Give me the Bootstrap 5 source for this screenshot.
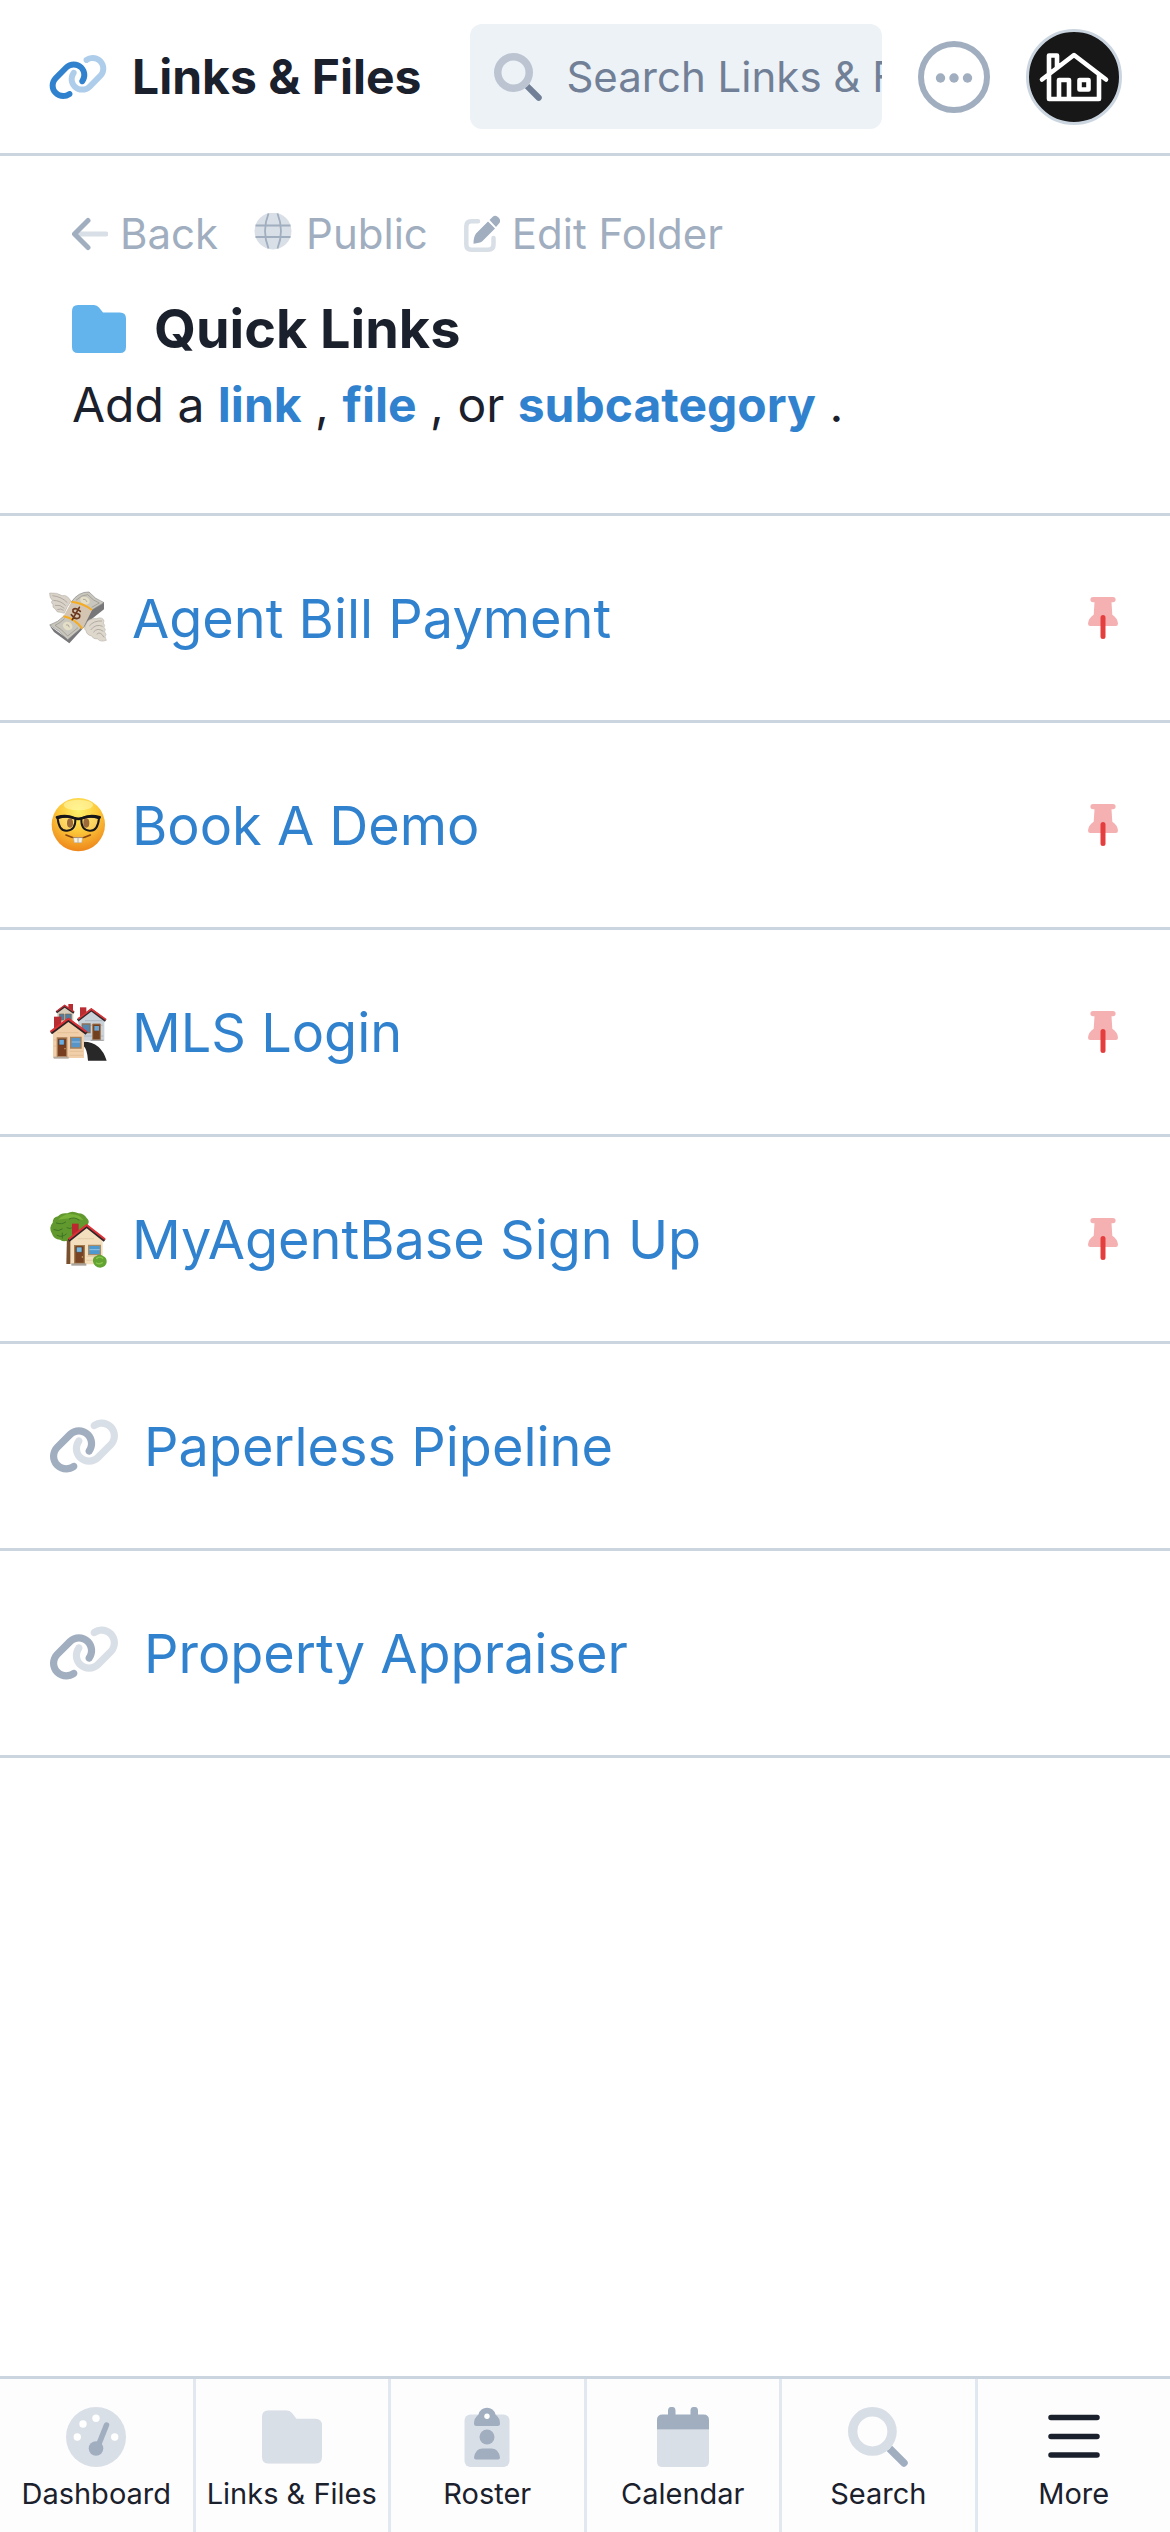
<!DOCTYPE html>
<html lang="en">
<head>
<meta charset="utf-8">
<meta name="viewport" content="width=device-width, initial-scale=1">
<title>Links &amp; Files</title>
<link href="https://cdn.jsdelivr.net/npm/bootstrap@5.3.0/dist/css/bootstrap.min.css" rel="stylesheet">
<style>
  body { font-family: Inter, "Liberation Sans", sans-serif; color: #1a202c; background: #fff; }
  a { text-decoration: none; color: #3182ce; }
  svg { display: block; flex: none; }
  .topbar { padding: 24px 48px; border-bottom: 3px solid #cbd5e0; }
  .brand { gap: 24px; margin-right: 49px; }
  .brand h1 { font-size: 48px; line-height: 72px; font-weight: 700; white-space: nowrap; }
  .finder { height: 105px; padding-left: 24px; gap: 24px; border-radius: 12px; background: #edf2f7; min-width: 0; overflow: hidden; }
  .finder input { font-size: 42px; line-height: 63px; border: 0; padding: 0; background: transparent; min-width: 0; width: 100%; outline: 0; color: #1a202c; }
  .finder input::placeholder { color: #718096; opacity: 1; }
  .round-btn { margin-left: 36px; padding: 0; border: 0; background: none; flex: none; }
  .folder-head { padding: 48px 72px 72px; border-bottom: 3px solid #cbd5e0; }
  .crumbs { gap: 36px; margin-bottom: 24px; }
  .crumbs a { gap: 12px; font-size: 42px; line-height: 60px; color: #a0aec0; }
  .folder-title { gap: 28px; }
  .folder-title h2 { font-size: 54px; line-height: 81px; font-weight: 700; }
  .folder-head p { font-size: 48px; line-height: 72px; }
  .folder-head p a { font-weight: 700; }
  .entry { height: 207px; padding: 0 52px 0 48px; border-bottom: 3px solid #cbd5e0; }
  .entry a { gap: 24px; font-size: 54px; line-height: 81px; }
  .tabbar { border-top: 3px solid #cbd5e0; background: #fdfdfe; }
  .tabbar li { flex: 1 1 0; }
  .tabbar li + li { border-left: 3px solid #e2e8f0; }
  .tabbar a { padding: 28px 0 20px; gap: 9px; font-size: 29px; line-height: 36px; color: #1a202c; white-space: nowrap; }
</style>
</head>
<body class="d-flex flex-column min-vh-100">

<svg width="0" height="0" class="position-absolute" aria-hidden="true">
  <symbol id="chain" viewBox="0 0 640 512">
    <path opacity=".4" d="M579.8 267.7c56.5-56.5 56.5-148 0-204.5c-50-50-128.8-56.5-186.3-15.4l-1.6 1.1c-14.4 10.3-17.7 30.3-7.4 44.6s30.3 17.7 44.6 7.4l1.6-1.1c32.1-22.9 76-19.3 103.8 8.6c31.5 31.5 31.5 82.5 0 114L422.3 334.8c-31.5 31.5-82.5 31.5-114 0c-27.9-27.9-31.5-71.8-8.6-103.8l1.1-1.6c10.3-14.4 6.9-34.4-7.4-44.6s-34.4-6.9-44.6 7.4l-1.1 1.6C206.5 251.2 213 330 263 380c56.5 56.5 148 56.5 204.5 0L579.8 267.7z"/>
    <path d="M60.2 244.3c-56.5 56.5-56.5 148 0 204.5c50 50 128.8 56.5 186.3 15.4l1.6-1.1c14.4-10.3 17.7-30.3 7.4-44.6s-30.3-17.7-44.6-7.4l-1.6 1.1c-32.1 22.9-76 19.3-103.8-8.6C74 372 74 321 105.5 289.5L217.7 177.2c31.5-31.5 82.5-31.5 114 0c27.9 27.9 31.5 71.8 8.6 103.9l-1.1 1.6c-10.3 14.4-6.9 34.4 7.4 44.6s34.4 6.9 44.6-7.4l1.1-1.6C433.5 260.8 427 182 377 132c-56.5-56.5-148-56.5-204.5 0L60.2 244.3z"/>
  </symbol>
  <symbol id="lens" viewBox="0 0 512 512">
    <path opacity=".4" d="M208 0a208 208 0 1 0 0 416a208 208 0 1 0 0-416zm0 80a128 128 0 1 1 0 256a128 128 0 1 1 0-256z"/>
    <path d="M330 376q28-18 46-46L500 454a32 32 0 0 1-46 46z"/>
  </symbol>
  <symbol id="folder" viewBox="0 0 54 48">
    <path d="M6 0h16q3 0 5 2.500l4 5h17q6 0 6 6v28.500q0 6-6 6H6q-6 0-6-6V6q0-6 6-6z"/>
  </symbol>
  <symbol id="pin" viewBox="0 0 30 42">
    <path fill="#f5b0b2" d="M5 0h20a2.500 2.500 0 0 1 0 5.200h-1.500l.8 12.600q5 3.200 5.700 8.700 0 2.500-2.200 2.500H2.200Q0 29 0 26.500 .7 21 5.700 17.800l.8-12.600H5A2.500 2.500 0 0 1 5 0z"/>
    <path fill="none" stroke="#e53e3e" stroke-width="5" stroke-linecap="round" d="M15 20.500V39.500"/>
  </symbol>
</svg>

<header class="topbar d-flex align-items-center">
  <div class="brand d-flex align-items-center">
    <svg width="60" height="48" fill="#3182ce" aria-hidden="true"><use href="#chain"/></svg>
    <h1 class="mb-0">Links &amp; Files</h1>
  </div>
  <label class="finder d-flex align-items-center flex-grow-1">
    <svg width="48" height="48" fill="#718096" aria-hidden="true"><use href="#lens"/></svg>
    <input type="text" placeholder="Search Links &amp; Files" aria-label="Search Links &amp; Files">
  </label>
  <button class="round-btn" type="button" aria-label="Options">
    <svg width="72" height="72" viewBox="0 0 72 72" fill="#a0aec0"><circle cx="36" cy="36" r="33" fill="none" stroke="#a0aec0" stroke-width="6"/><circle cx="22.500" cy="37" r="4.700"/><circle cx="36" cy="37" r="4.700"/><circle cx="49.500" cy="37" r="4.700"/></svg>
  </button>
  <button class="round-btn" type="button" aria-label="Account">
    <svg width="96" height="96" viewBox="0 0 96 96"><circle cx="48" cy="48" r="46.500" fill="#171717" stroke="#cbd5e0" stroke-width="3"/>
      <g fill="none" stroke="#fff" stroke-width="4.600" stroke-linecap="round" stroke-linejoin="round"><path d="M16 50.500 48 26 80 50.500M23 46V70H73V46M23 44V26.500H31V38M33 70V51H43V70M53.500 51h9v9.500h-9z"/></g></svg>
  </button>
</header>

<main class="flex-grow-1">
  <section class="folder-head">
    <nav class="crumbs d-flex" aria-label="Folder actions">
      <a href="#" class="d-flex align-items-center">
        <svg width="36" height="36" viewBox="0 0 36 36" fill="none" stroke="#a0aec0" stroke-width="5" stroke-linecap="round" stroke-linejoin="round"><path opacity=".4" d="M7 18H34"/><path d="M16 4.500 2.500 18 16 31.500"/></svg>Back</a>
      <a href="#" class="d-flex align-items-center">
        <svg width="40" height="42" viewBox="0 0 40 42"><circle cx="19" cy="18" r="18.500" fill="#d9dfe6"/><path fill="none" stroke="#a0aec0" stroke-width="1.800" d="M1.500 12.500H36.500M1.500 24H36.500M14.500 .5Q7.500 18 14.500 35.500M23.500 .5Q30.500 18 23.500 35.500"/></svg>Public</a>
      <a href="#" class="d-flex align-items-center">
        <svg width="36" height="38" viewBox="0 0 36 38"><path fill="none" stroke="#d9dfe6" stroke-width="4.500" stroke-linecap="round" d="M14 6.300H7.500Q2.300 6.300 2.300 11.500V29.500Q2.300 34.800 7.500 34.800H24Q29.500 34.800 29.500 29.500V23"/><path fill="#a0aec0" d="M24 6.500 31 13.500 18 26.500Q16 28 9.500 28.700 9.500 22 12 18.500zM25.500 5 28.500 2Q31.500-.5 34.500 2.500T35 8.500L32 12z"/></svg>Edit Folder</a>
    </nav>
    <div class="folder-title d-flex align-items-center">
      <svg width="54" height="48" fill="#63b3ed" aria-hidden="true"><use href="#folder"/></svg>
      <h2 class="mb-0">Quick Links</h2>
    </div>
    <p class="mb-0">Add a <a href="#">link</a> , <a href="#">file</a> , or <a href="#">subcategory</a> .</p>
  </section>

  <ul class="list-unstyled mb-0">
    <li class="entry d-flex align-items-center justify-content-between">
      <a href="#" class="d-flex align-items-center">
        <svg width="60" height="60" viewBox="54 54 180 180" aria-hidden="true">
          <path fill="#d8d2c8" stroke="#aaa49d" stroke-width="1.500" d="M123 94Q112 73 96 77 83 67 59 69 58 83 67 91 61 98 69 104 66 113 76 117 79 128 91 127L103 130 112 110z"/>
          <path fill="none" stroke="#9d968f" stroke-width="2" d="M67 77Q95 80 112 98M70 91Q92 92 107 107M75 106Q91 103 103 115M82 119Q92 114 101 121"/>
          <path fill="#77777a" d="M59 167 113 207 154 170 187 118 222 96V118L184 148 118 220 72 186z"/>
          <path fill="#c9c7bd" stroke="#858585" stroke-width="2" d="M124 96Q145 65 177 66 195 88 222 98 201 110 186 120 158 99 124 96zM102 138Q84 157 59 165 87 180 113 209 136 189 154 174 134 146 102 138z"/>
          <path fill="none" stroke="#929087" stroke-width="2" d="M138 91Q155 74 173 74 190 93 208 99L185 112M104 146Q89 160 75 166 96 178 113 198L144 173"/>
          <ellipse cx="165" cy="92" rx="15" ry="11" fill="#e4dec7" transform="rotate(25 165 92)"/><ellipse cx="113" cy="168" rx="15" ry="12" fill="#e4dec7" transform="rotate(25 113 168)"/>
          <path fill="none" stroke="#929087" stroke-width="2" d="M159 88q8-3 12 8M108 165q8-4 10 7"/>
          <path fill="#d3c5b2" d="M124 96Q160 99 186 120L158 177Q136 145 100 140z"/>
          <path fill="none" stroke="#f6ac21" stroke-width="6" d="M124 95Q160 99 186 120M100 139Q134 145 157 176"/>
          <path fill="none" stroke="#6b3820" stroke-width="5" stroke-linecap="round" d="M151 124Q137 111 129 119 127 130 140 130 153 132 148 143 137 151 124 134M148 112 127 149"/>
          <path fill="#ddd7cc" stroke="#aaa49d" stroke-width="1.500" d="M170 158Q178 144 199 146 218 139 222 153 217 159 224 166 219 171 226 179 220 185 228 193 222 199 229 211 211 217 203 207 189 208 185 198 170 195 168 182 159 177 170 158z"/>
          <path fill="none" stroke="#9d968f" stroke-width="2" d="M216 153Q192 151 178 168M218 169Q197 160 182 180M220 184Q202 171 190 187M222 202Q211 182 200 193"/>
        </svg>Agent Bill Payment</a>
      <svg width="30" height="42" role="img" aria-label="Pinned"><use href="#pin"/></svg>
    </li>
    <li class="entry d-flex align-items-center justify-content-between">
      <a href="#" class="d-flex align-items-center">
        <svg width="60" height="60" viewBox="54 75 180 180" aria-hidden="true">
          <defs><radialGradient id="face" cx=".5" cy=".25" r=".75"><stop offset="0" stop-color="#fff36a"/><stop offset=".5" stop-color="#fcc83a"/><stop offset="1" stop-color="#ee861b"/></radialGradient></defs>
          <circle cx="145" cy="164" r="80" fill="url(#face)"/>
          <ellipse cx="145" cy="105" rx="44" ry="16" fill="#fff9ae" opacity=".6"/>
          <ellipse cx="120" cy="159" rx="9" ry="14" fill="#87480f"/><ellipse cx="169" cy="159" rx="9" ry="14" fill="#87480f"/>
          <path fill="#fff" opacity=".18" d="M84 142h52v38H90zM153 142h52l-6 38h-38z"/>
          <path fill="none" stroke="#17171a" stroke-width="6" stroke-linejoin="round" d="M83 145Q110 136 136 145 138 180 111 182 87 184 83 145zM154 145Q180 136 207 145 203 184 179 182 152 180 154 145z"/>
          <path fill="none" stroke="#17171a" stroke-width="8" stroke-linecap="round" d="M81 142Q108 134 132 144 145 149 158 144 182 134 209 142"/>
          <path fill="none" stroke="#8b4610" stroke-width="5" stroke-linecap="round" d="M108 195Q145 214 181 195"/>
          <path fill="#f5f1e7" stroke="#b3a897" stroke-width="1.500" d="M130 203h14v15h-11zM144 203h14l-3 15h-11z"/>
        </svg>Book A Demo</a>
      <svg width="30" height="42" role="img" aria-label="Pinned"><use href="#pin"/></svg>
    </li>
    <li class="entry d-flex align-items-center justify-content-between">
      <a href="#" class="d-flex align-items-center">
        <svg width="60" height="60" viewBox="54 66 180 180" aria-hidden="true">
          <path fill="#b92c31" d="M115 72h14v25h-14z"/><path fill="#d8cdbb" d="M82 96 104 79 130 98V125H82z"/><path fill="#527ea2" stroke="#81664d" stroke-width="2" d="M88 102h14v18H88zM106 102h18v18h-18z"/>
          <path fill="none" stroke="#34272a" stroke-width="7" d="M79 97 104 79 132 98"/><path fill="none" stroke="#c93238" stroke-width="4" d="M80 94 104 76 131 95"/>
          <path fill="#b92c31" d="M150 82h19v27h-19z"/><path fill="#c9d2d9" d="M145 119 184 89 223 120V182H145z"/><path fill="none" stroke="#9fabb5" stroke-width="2" d="M165 122h52M153 136h65M160 168h60"/>
          <path fill="#5488b2" stroke="#8a7158" stroke-width="4" d="M157 132h23v26h-23z"/><path fill="#71401f" stroke="#a57954" stroke-width="3" d="M188 132h23v48h-23z"/><path fill="#6aa6d5" d="M193 138h14v14h-14z"/><path fill="#aaa9a7" d="M182 179h39v4h-39z"/>
          <path fill="none" stroke="#34272a" stroke-width="8" d="M143 121 184 90 227 122"/><path fill="none" stroke="#d93438" stroke-width="5" d="M144 117 184 87 228 119"/>
          <path fill="#292829" d="M161 185Q213 186 230 242H174Q172 208 161 198z"/>
          <path fill="#b92c31" d="M72 110h22v36H72z"/><path fill="#f0cfaa" d="M69 158 115 122 162 158V234H69z"/><path fill="none" stroke="#deb68c" stroke-width="2" d="M82 158h64M71 180h8M71 198h8M119 214h40M119 226h40"/>
          <path fill="#773f20" stroke="#a77950" stroke-width="4" d="M82 174h28v56H82z"/><path fill="#67aee5" stroke="#5b301a" stroke-width="2" d="M87 178h16v17H87z"/><circle cx="105" cy="206" r="2" fill="#dfb873"/>
          <path fill="#5794c8" stroke="#a57f57" stroke-width="4" d="M122 172h31v32h-31z"/><path stroke="#b5d8ec" stroke-width="2" d="M125 186h26"/><path fill="#b4aaa0" d="M71 230h45v6H71z"/>
          <path fill="none" stroke="#302426" stroke-width="10" d="M63 159 115 120 170 160"/><path fill="none" stroke="#df3035" stroke-width="6" d="M62 155 115 116 170 156"/>
        </svg>MLS Login</a>
      <svg width="30" height="42" role="img" aria-label="Pinned"><use href="#pin"/></svg>
    </li>
    <li class="entry d-flex align-items-center justify-content-between">
      <a href="#" class="d-flex align-items-center">
        <svg width="60" height="60" viewBox="54 57 180 180" aria-hidden="true">
          <path fill="#78502e" d="M111 130h13v92h-15z"/><path fill="#6b482b" d="M94 132l16 22 9-18z"/>
          <path fill="#62992e" d="M66 131Q55 112 68 98 68 82 84 79 94 67 112 70 127 61 145 70 162 70 170 84 180 92 174 103 170 119 150 122 139 142 119 147 104 159 90 149 71 148 66 131z"/>
          <path fill="#79b239" d="M84 89Q106 69 126 73 150 73 160 91 130 79 84 89z"/><path fill="none" stroke="#3e7425" stroke-width="3" stroke-linecap="round" d="M72 119q14 7 25-2M81 136q16 8 28-4M79 99q17 6 28-3M111 113q12 7 22-5M118 87q15-8 29 3M97 145v-16"/>
          <path fill="#bd272e" d="M126 101h20v33h-20z"/><path fill="#f3dfbd" d="M121 148 170 109 218 150V223H121z"/><path fill="none" stroke="#dbc29d" stroke-width="2" d="M143 146h49M170 199h30M169 211h22"/>
          <path fill="#774323" stroke="#a47b4b" stroke-width="4" d="M134 167h29v53h-29z"/><path fill="#72b9e5" stroke="#593520" stroke-width="2" d="M139 171h17v16h-17z"/><circle cx="157" cy="201" r="2" fill="#e1bd75"/>
          <path fill="#4e98d0" stroke="#a88b67" stroke-width="4" d="M176 166h35v28h-35z"/><path stroke="#b4daf0" stroke-width="2" d="M178 179h31"/><path fill="#aaa39b" d="M124 220h45v7h-45z"/>
          <path fill="none" stroke="#302527" stroke-width="9" d="M116 152 170 109 224 152"/><path fill="none" stroke="#df3137" stroke-width="6" d="M116 148 170 105 225 148"/>
          <path fill="#62a331" d="M189 215Q187 202 199 198 208 190 219 198 231 202 230 217 228 231 211 233 193 232 189 215z"/><path fill="none" stroke="#87c54a" stroke-width="4" stroke-linecap="round" d="M200 205q10-7 18 0M199 219q9 5 18-1"/>
        </svg>MyAgentBase Sign Up</a>
      <svg width="30" height="42" role="img" aria-label="Pinned"><use href="#pin"/></svg>
    </li>
    <li class="entry d-flex align-items-center">
      <a href="#" class="d-flex align-items-center"><svg width="72" height="58" fill="#a0aec0" aria-hidden="true"><use href="#chain"/></svg>Paperless Pipeline</a>
    </li>
    <li class="entry d-flex align-items-center">
      <a href="#" class="d-flex align-items-center"><svg width="72" height="58" fill="#a0aec0" aria-hidden="true"><use href="#chain"/></svg>Property Appraiser</a>
    </li>
  </ul>
</main>

<nav class="tabbar sticky-bottom" aria-label="Main">
  <ul class="list-unstyled d-flex mb-0">
    <li><a href="#" class="d-flex flex-column align-items-center">
      <svg width="60" height="60" viewBox="0 0 60 60"><circle cx="30" cy="30" r="30" fill="#d9dfe6"/><g fill="#fff"><circle cx="11.300" cy="30" r="3.700"/><circle cx="17" cy="17" r="3.700"/><circle cx="30" cy="11.300" r="3.700"/><circle cx="48.700" cy="30" r="3.700"/></g><circle cx="30" cy="41.500" r="7.300" fill="#a0aec0"/><path stroke="#a0aec0" stroke-width="5.500" stroke-linecap="round" d="M40.500 18 32.500 38"/></svg>Dashboard</a></li>
    <li><a href="#" class="d-flex flex-column align-items-center">
      <svg width="60" height="60" viewBox="0 -3 54 54" fill="#d9dfe6"><use href="#folder" width="54" height="48"/></svg>Links &amp; Files</a></li>
    <li><a href="#" class="d-flex flex-column align-items-center">
      <svg width="46" height="60" viewBox="0 0 46 60"><rect x="0.500" y="7.500" width="45" height="52.500" rx="6" fill="#d9dfe6"/><path fill="#a0aec0" d="M14.500 7.500a8.700 8.700 0 0 1 17 0Q36 11 36 16.500 36 19 33.500 19h-21Q10 19 10 16.500 10 11 14.500 7.500zM10 50.500Q11.500 41.500 18.500 41.500h9Q34.500 41.500 36 50.500 36 52.500 34 52.500H12Q10 52.500 10 50.500z"/><circle cx="23" cy="9.300" r="2.700" fill="#fff"/><circle cx="23" cy="30" r="7.500" fill="#a0aec0"/></svg>Roster</a></li>
    <li><a href="#" class="d-flex flex-column align-items-center">
      <svg width="52" height="60" viewBox="0 0 52 60"><path fill="#d9dfe6" d="M0 22.500H52V54.500Q52 60 46.500 60H5.500Q0 60 0 54.500z"/><path fill="#a0aec0" d="M0 22.500V13Q0 7.500 5.500 7.500H11V3.700a3.700 3.700 0 0 1 7.500 0V7.500h15V3.700a3.700 3.700 0 0 1 7.500 0V7.500h5.500Q52 7.500 52 13v9.500z"/></svg>Calendar</a></li>
    <li><a href="#" class="d-flex flex-column align-items-center">
      <svg width="60" height="60" fill="#a0aec0"><use href="#lens"/></svg>Search</a></li>
    <li><a href="#" class="d-flex flex-column align-items-center">
      <svg width="52" height="60" viewBox="0 0 52 60"><path stroke="#1a202c" stroke-width="5.500" stroke-linecap="round" d="M3 10.500H49M3 29.500H49M3 48H49"/></svg>More</a></li>
  </ul>
</nav>

<script src="https://cdn.jsdelivr.net/npm/bootstrap@5.3.0/dist/js/bootstrap.bundle.min.js"></script>
</body>
</html>
